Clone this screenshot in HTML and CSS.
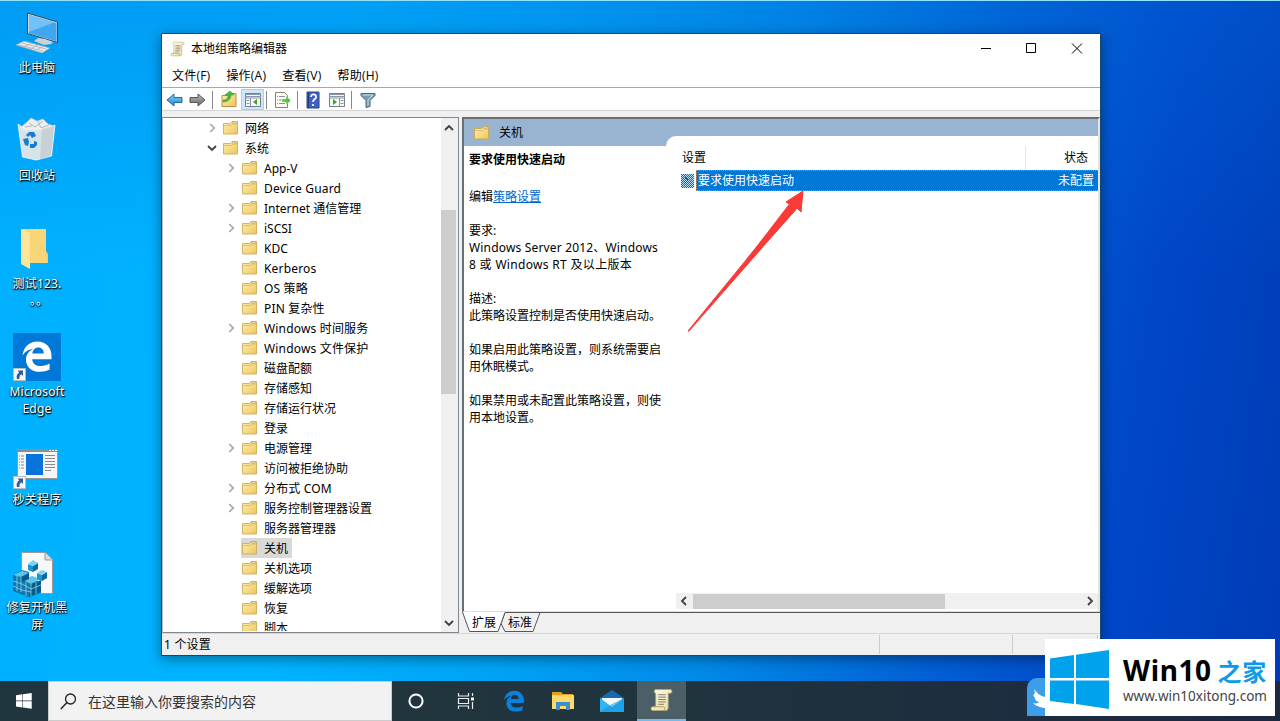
FILE: index.html
```html
<!DOCTYPE html>
<html lang="zh-CN">
<head>
  <meta charset="UTF-8" />
  <title>本地组策略编辑器</title>
  <link rel="stylesheet" href="styles.css">
</head>
<body>

  <!-- shared icons -->
  <svg class="defs" width="0" height="0">
    <defs>
      <linearGradient id="gold" x1="0" y1="0" x2="1" y2="1"><stop offset="0" stop-color="#ffefb0"/><stop offset="1" stop-color="#edc65c"/></linearGradient>
      <linearGradient id="blue" x1="0" y1="0" x2="0" y2="1"><stop offset="0" stop-color="#8bd0f5"/><stop offset="1" stop-color="#1489d6"/></linearGradient>
      <linearGradient id="grey" x1="0" y1="0" x2="0" y2="1"><stop offset="0" stop-color="#bbb"/><stop offset="1" stop-color="#666"/></linearGradient>
      <linearGradient id="paper" x1="0" y1="0" x2="1" y2="1"><stop offset="0" stop-color="#fffbe8"/><stop offset="1" stop-color="#e9dba5"/></linearGradient>
      <pattern id="dots" width="2" height="2" patternUnits="userSpaceOnUse"><rect width="2" height="2" fill="#b5dcf3"/><path d="M0 0h1v1H0zM1 1h1v1H1z" fill="#0b6fb5"/></pattern>
    </defs>
    <symbol id="folder" viewBox="0 0 15 14">
      <path d="M.5 2.500h7l1.500-2h5.500v12.500H.5z" fill="url(#gold)" stroke="#c8a450" stroke-width=".8"/>
      <path d="M1 4.500h7.500L10 3h4" fill="none" stroke="#d9b45d" stroke-width=".8"/>
      <path d="M9.500 .8H13v1.400H9.500z" fill="#fff8dd" stroke="#b69a55" stroke-width=".6"/>
    </symbol>
    <symbol id="right" viewBox="0 0 7 10"><path d="M1.200 1l4 4-4 4" fill="none" stroke="#a6a6a6" stroke-width="1.700"/></symbol>
    <symbol id="down" viewBox="0 0 10 7"><path d="M1 1l4 4 4-4" fill="none" stroke="#404040" stroke-width="1.800"/></symbol>
    <symbol id="scroll" viewBox="0 0 24 24">
      <path d="M6 1h15c2.500 0 2.500 4 0 4H19v14c0 3-1 4-3 4H3c-2.500 0-2.500-4 0-4h3V5C4 5 4 1 6 1z" fill="url(#paper)" stroke="#b5a679" stroke-width=".8"/>
      <path d="M8.500 6.500h8M8.500 9h8M8.500 11.500h8M8.500 14h8M8.500 16.500h6" stroke="#807c6c"/>
      <path d="M3 19h11c2 0 2 4 0 4" fill="none" stroke="#b5a04f"/>
    </symbol>
    <symbol id="shortcut" viewBox="0 0 13 13">
      <path d="M.5.500h12v12H.5z" fill="#f7f7f7" stroke="#bbb"/>
      <path d="M4.500 2.500H10V8L8.200 6.200C6.500 7.500 6.200 9 6.500 11H4C3 8.500 4 6 6.200 4.300z" fill="#2c5d9d"/>
    </symbol>
    <symbol id="edge" viewBox="0 0 32 32">
      <path d="M1.500 15C2.500 6.500 8.500 1 16.200 1 25.500 1 30.500 7.500 30.500 15.500v3.300H11.200c.4 4.700 4 6.800 8.800 6.800 3.200 0 6-.9 8.600-2.500v6c-3 1.400-6 2.200-9.800 2.200C10.500 31.300 5 26.500 5 19.200c0-5 2.700-8.800 7.300-11C7.800 8.600 4 11 1.500 15zm9.800-1.900h11.500c0-3.700-2-6.200-5.500-6.200-3.400 0-5.600 2.600-6 6.200z"/>
    </symbol>
    <symbol id="winlogo" viewBox="0 0 60 60">
      <path d="M0 8.500L24 5v23H0zM26 4.800L59 0v28H26zM0 30.500h24V54L0 51zM26 30.500h33V59l-33-5z"/>
    </symbol>
  </svg>

  <div class="desktop">
    <div class="icons">
      <div class="shortcut">
        <svg width="48" height="48" viewBox="0 0 48 48">
          <path d="M14.500 4l30 9v20.500l-30-9z" fill="#c9d4dc" stroke="#334d60"/>
          <path d="M16 6l27.500 8.200v18L16 24z" fill="#3fa6f0"/><path d="M16 6l25 7.500L16 23z" fill="#72c1f8"/>
          <path d="M25 29l7 1 8 3-2 2-7 1-10-4z" fill="#ccd2d5"/>
          <path d="M3 36l8-4 26 7-8 5z" fill="#eee" stroke="#96a7b0" stroke-width=".8"/>
          <path d="M6 36l24 6M9 34l24 6M11 38l8-4M17 40l8-4M23 41l8-4" stroke="#a5b0b5" stroke-width=".8"/>
        </svg>
        <span>此电脑</span>
      </div>
      <div class="shortcut">
        <svg width="48" height="48" viewBox="0 0 48 48">
          <path d="M8 10l6-5 4-4 6 3 6-2 5 5 6 2-4 5H9z" fill="#eceeef" stroke="#b8c2c8" stroke-width=".7"/>
          <path d="M16 6l6 4 8-6M25 4l3 7 8-3M12 10l7-1" fill="none" stroke="#b0bbc2"/>
          <path d="M5 7l7 5h21l9-4-3.500 31-15 4-14-3z" fill="#e2e6e8" fill-opacity=".95" stroke="#f6f8f9" stroke-width=".8"/>
          <path d="M29 12l12-3.500-3 30-11 4z" fill="#bcc5ca" opacity=".6"/>
          <g fill="#187bd2"><path d="M13 18l3-3h5l2 4-4 2-2-3-2 2z"/><path d="M10 22l5-1 1 4-1 4-3-1z"/><path d="M17 27h4v-3l3 1v3l-3 3h-4z"/></g>
        </svg>
        <span>回收站</span>
      </div>
      <div class="shortcut">
        <svg width="48" height="48" viewBox="0 0 48 48">
          <path d="M8 4h25v22l2 3v9H13z" fill="#f3cf6c"/><path d="M17 8v30h16V4H8z" fill="#f8d577"/><path d="M8 4l9 4v36l-9-5z" fill="#ffe59a"/>
        </svg>
        <span>测试123.<br><i>。。</i></span>
      </div>
      <div class="shortcut">
        <svg width="48" height="48" viewBox="0 0 48 48">
          <path d="M0 0h48v48H0z" fill="#0078d7"/>
          <use href="#edge" x="8" y="7" width="32" height="33" fill="#fff"/>
          <use href="#shortcut" x="0" y="35" width="13" height="13"/>
        </svg>
        <span>Microsoft<br>Edge</span>
      </div>
      <div class="shortcut">
        <svg width="48" height="48" viewBox="0 0 48 48">
          <path d="M4.500 8.500h40v29h-40z" fill="#f5f5f5" stroke="#9a9a9a"/><path d="M4 8h41v3H4z" fill="#8e8e8e"/>
          <path d="M36 9.500h2M39 9.500h2M42 9.500h2" stroke="#fff"/><path d="M13 13h17v21H13z" fill="#0874db"/>
          <path d="M6 15h5M6 18h5M6 21h5M6 24h5M6 27h5" stroke="#8a8a8a" stroke-dasharray="1 1 3"/>
          <path d="M32 14.500h10M32 17.500h10M32 20.500h10M32 23.500h10M32 26.500h10M32 29.500h6" stroke="#8a8a8a"/>
          <use href="#shortcut" x="0" y="35" width="13" height="13"/>
        </svg>
        <span>秒关程序</span>
      </div>
      <div class="shortcut">
        <svg width="48" height="48" viewBox="0 0 48 48">
          <path d="M8.500 3.500h24l7 7v34h-31z" fill="#f8f8f8" stroke="#999"/><path d="M32 3.500v7.500h7.500" fill="#ddd" stroke="#999"/>
          <path d="M0 26l9-5 7 2v6l12 5v10l-13 4-15-6z" fill="#0f79ad"/>
          <path d="M0 26l9-4 7 2-8 4zM10 31l9-4 9 3-10 5z" fill="#5fc4ea"/>
          <path d="M8 28l8-4v6l-7 3zM18 35l10-4v12l-12 5z" fill="#075b8c"/>
          <path d="M8 28v15M18 35v12M0 32l9 3 9 5 10-4M0 37l9 4 9 2M4 27v15M13 33v14M23 33v12" stroke="#8dd3ef" stroke-width=".8" fill="none"/>
          <path d="M15 15l5 2v6l-5-2zM24 24l5 2v6l-5-2z" fill="#1896cf"/><path d="M20 17l5-3v6l-5 3zM29 26l5-3v6l-5 3z" fill="#076a9e"/>
          <path d="M15 15l5-4 5 3-5 3zM24 24l5-3 5 2-5 3z" fill="#7dd1f3"/>
        </svg>
        <span>修复开机黑<br>屏</span>
      </div>
    </div>

    <div class="window">
      <div class="titlebar">
        <svg width="15" height="16"><use href="#scroll"/></svg>
        <span class="title">本地组策略编辑器</span>
        <svg class="controls" width="102" height="12" viewBox="0 0 102 12">
          <path d="M0 5.500h10M45.500 .500h9v9h-9zM91 .500l10 10M101 .500l-10 10" fill="none" stroke="#000"/>
        </svg>
      </div>
      <div class="menubar"><span>文件(F)</span><span>操作(A)</span><span>查看(V)</span><span>帮助(H)</span></div>
      <div class="toolbar">
        <svg width="220" height="22" viewBox="0 0 220 22">
          <path d="M1 12l7-6v3.500h8v5H8V18z" fill="url(#blue)" stroke="#23699e"/>
          <path d="M39 12l-7-6v3.500h-8v5h8V18z" fill="url(#grey)" stroke="#555"/>
          <path d="M46.500 3v18" stroke="#888"/>
          <path d="M56 7.500h7l1-2h6v13H56z" fill="url(#gold)" stroke="#b9913d"/>
          <path d="M57 12c4 0 5-2 5-5h-3l5-4 4 4h-3c0 4-3 7-8 7z" fill="#4cb83a" stroke="#388d29" stroke-width=".5"/>
          <path d="M75.500 1.500h22v20h-22z" fill="#cce8ff" stroke="#99d1ff"/>
          <path d="M79.500 5.500h15v13h-15z" fill="#f7f7f7" stroke="#777e87"/><path d="M79 8.500h16M79 6.500h16M79 10h16M84.500 10v8M80.500 12.500h3M80.500 15.500h3" stroke="#8c98a5"/><path d="M91 11v6l-4-3z" fill="#34a52c"/>
          <path d="M100.500 3v18" stroke="#888"/>
          <path d="M109.500 4.500h9l3 3v12h-12z" fill="#fffdf0" stroke="#8b836d"/><path d="M111 8.500h1M111 12h1M111 15.500h1M113 8.500h6M113 12h4M113 15.500h6" stroke="#8893a2"/><path d="M116 11h4V8l5 4.500-5 4.500v-3h-4z" fill="#53c540" stroke="#fff" stroke-width=".4"/>
          <path d="M131.500 3v18" stroke="#888"/>
          <path d="M141 4h12v16h-12z" fill="#3e62c4" stroke="#23458c"/><path d="M142.500 4v16" stroke="#193a7e"/><path d="M145 9c0-4 6-3 5 .5-1 2-3 2-3 4.500M147 16v2" fill="none" stroke="#fff" stroke-width="1.700"/>
          <path d="M163.500 5.500h15v13h-15z" fill="#f7f7f7" stroke="#777e87"/><path d="M163 6.500h16M163 8.500h16M163 10h16M173.500 10v8M174.500 12.500h3M174.500 15.500h3" stroke="#8c98a5"/><path d="M167 11v6l4-3z" fill="#34a52c"/>
          <path d="M185.500 3v18" stroke="#888"/>
          <path d="M195 5.500h14v2l-5 5v6l-4 1v-7l-5-5z" fill="#789cb4" stroke="#506878"/><path d="M197 7h10l-5 5v6" fill="none" stroke="#c9e1ed"/>
        </svg>
      </div>

      <div class="panes">
        <div class="tree">
          <ul class="nodes">
            <li class="top"><svg class="arrow"><use href="#right"/></svg><svg class="folder"><use href="#folder"/></svg><span>网络</span></li>
            <li class="top"><svg class="arrow open"><use href="#down"/></svg><svg class="folder"><use href="#folder"/></svg><span>系统</span></li>
            <li><svg class="arrow"><use href="#right"/></svg><svg class="folder"><use href="#folder"/></svg><span>App-V</span></li>
            <li><svg class="arrow"></svg><svg class="folder"><use href="#folder"/></svg><span class="latin">Device Guard</span></li>
            <li><svg class="arrow"><use href="#right"/></svg><svg class="folder"><use href="#folder"/></svg><span>Internet 通信管理</span></li>
            <li><svg class="arrow"><use href="#right"/></svg><svg class="folder"><use href="#folder"/></svg><span>iSCSI</span></li>
            <li><svg class="arrow"></svg><svg class="folder"><use href="#folder"/></svg><span>KDC</span></li>
            <li><svg class="arrow"></svg><svg class="folder"><use href="#folder"/></svg><span class="latin">Kerberos</span></li>
            <li><svg class="arrow"></svg><svg class="folder"><use href="#folder"/></svg><span class="latin">OS 策略</span></li>
            <li><svg class="arrow"></svg><svg class="folder"><use href="#folder"/></svg><span class="latin">PIN 复杂性</span></li>
            <li><svg class="arrow"><use href="#right"/></svg><svg class="folder"><use href="#folder"/></svg><span class="latin">Windows 时间服务</span></li>
            <li><svg class="arrow"></svg><svg class="folder"><use href="#folder"/></svg><span class="latin">Windows 文件保护</span></li>
            <li><svg class="arrow"></svg><svg class="folder"><use href="#folder"/></svg><span>磁盘配额</span></li>
            <li><svg class="arrow"></svg><svg class="folder"><use href="#folder"/></svg><span>存储感知</span></li>
            <li><svg class="arrow"></svg><svg class="folder"><use href="#folder"/></svg><span>存储运行状况</span></li>
            <li><svg class="arrow"></svg><svg class="folder"><use href="#folder"/></svg><span>登录</span></li>
            <li><svg class="arrow"><use href="#right"/></svg><svg class="folder"><use href="#folder"/></svg><span>电源管理</span></li>
            <li><svg class="arrow"></svg><svg class="folder"><use href="#folder"/></svg><span>访问被拒绝协助</span></li>
            <li><svg class="arrow"><use href="#right"/></svg><svg class="folder"><use href="#folder"/></svg><span class="latin">分布式 COM</span></li>
            <li><svg class="arrow"><use href="#right"/></svg><svg class="folder"><use href="#folder"/></svg><span>服务控制管理器设置</span></li>
            <li><svg class="arrow"></svg><svg class="folder"><use href="#folder"/></svg><span>服务器管理器</span></li>
            <li><svg class="arrow"></svg><div class="selected"><svg class="folder"><use href="#folder"/></svg><span>关机</span></div></li>
            <li><svg class="arrow"></svg><svg class="folder"><use href="#folder"/></svg><span>关机选项</span></li>
            <li><svg class="arrow"></svg><svg class="folder"><use href="#folder"/></svg><span>缓解选项</span></li>
            <li><svg class="arrow"></svg><svg class="folder"><use href="#folder"/></svg><span>恢复</span></li>
            <li><svg class="arrow"></svg><svg class="folder"><use href="#folder"/></svg><span>脚本</span></li>
          </ul>
          <div class="vscroll">
            <svg width="10" height="7"><path d="M1 6l4-4 4 4" fill="none" stroke="#404040" stroke-width="1.800"/></svg>
            <div class="vthumb"></div>
            <svg width="10" height="7"><use href="#down"/></svg>
          </div>
        </div>

        <div class="right">
          <div class="content">
            <div class="side">
              <div class="heading"><svg class="folder"><use href="#folder"/></svg><span>关机</span></div>
              <div class="desc">
                <b>要求使用快速启动</b>
                <p class="edit">编辑<a>策略设置</a></p>
                <p>要求:<br><span class="latin">Windows Server 2012、Windows</span><br><span class="wide">8 或 Windows RT 及以上版本</span></p>
                <p>描述:<br>此策略设置控制是否使用快速启动。</p>
                <p>如果启用此策略设置，则系统需要启<br>用休眠模式。</p>
                <p>如果禁用或未配置此策略设置，则使<br>用本地设置。</p>
              </div>
            </div>
            <div class="settings">
              <div class="list">
                <div class="columns"><span>设置</span><span class="state">状态</span></div>
                <div class="row">
                  <svg width="13" height="14"><path d="M0 0h13v14H0z" fill="url(#dots)"/><path d="M4 3l3 3-3 3" fill="none" stroke="#155a8d"/></svg>
                  <div class="cells"><span>要求使用快速启动</span><span>未配置</span></div>
                </div>
                <div class="hscroll">
                  <svg width="7" height="10"><path d="M6 1L2 5l4 4" fill="none" stroke="#404040" stroke-width="1.800"/></svg>
                  <div class="hthumb"></div>
                  <svg width="7" height="10"><path d="M1 1l4 4-4 4" fill="none" stroke="#404040" stroke-width="1.800"/></svg>
                </div>
              </div>
            </div>
          </div>
          <div class="tabs">
            <svg width="638" height="21" viewBox="0 0 638 21">
              <path d="M43 .500h35l-7 19H43l-4-8z" fill="#f0f0f0" stroke="#555"/>
              <path d="M.5 0l7 19.500H36L43 0z" fill="#fff"/>
              <path d="M.5 0l7 19.500H36L43 .500h595" fill="none" stroke="#555"/>
            </svg>
            <div class="labels"><span>扩展</span><span>标准</span></div>
          </div>
        </div>
      </div>
      <div class="status"><span class="count">1 个设置</span><span class="part"></span><span class="part last"></span></div>
    </div>

    <svg class="pointer" width="120" height="144" viewBox="0 0 120 144">
      <path d="M2 141L105 15l-5-3 17-11-2 21-4-4L3 141z" fill="#f93a37" stroke="#f93a37"/>
      <path d="M60 70L103 14l7 6L58 76z" fill="#f93a37"/>
    </svg>
  </div>

  <div class="taskbar">
    <div class="start"><svg width="16" height="16" fill="#fff"><use href="#winlogo"/></svg></div>
    <div class="search">
      <svg width="17" height="17"><circle cx="10.500" cy="6" r="5" fill="none" stroke="#222" stroke-width="1.300"/><path d="M7 9.500L.8 16" stroke="#222" stroke-width="1.500"/></svg>
      <span>在这里输入你要搜索的内容</span>
    </div>
    <div class="apps">
      <div class="app"><svg width="16" height="16"><circle cx="8" cy="8" r="6.600" fill="none" stroke="#fff" stroke-width="2"/></svg></div>
      <div class="app"><svg width="17" height="16"><path d="M1.500 0v3h10V0M1.500 16v-3h10v3M1.500 5.500h10v5h-10zM15.500 0v3M15.500 9v7" fill="none" stroke="#e8eef0" stroke-width="1.200"/><path d="M14 4.500h3v3h-3z" fill="#fff"/></svg></div>
      <div class="app"><svg width="22" height="22" fill="#0b80df"><use href="#edge"/></svg></div>
      <div class="app"><svg width="22" height="20"><path d="M0 1h9l2 2h10v5H0z" fill="#e99e17"/><path d="M0 4h22v14H0z" fill="#ffda6a"/><path d="M4 19v-8h14v8h-4v-4H8v4z" fill="#3b8fcd"/></svg></div>
      <div class="app"><svg width="24" height="23"><path d="M0 8l12-8 12 8v14H0z" fill="#1669b4"/><path d="M2 8h20v10H2z" fill="#f5fafc"/><path d="M0 8l12 9L24 8v14H0z" fill="#2db6f0"/><path d="M0 22l12-8L24 8v14z" fill="#1492dc" opacity=".55"/></svg></div>
      <div class="app active"><svg width="23" height="24"><use href="#scroll"/></svg></div>
    </div>
  </div>

  <div class="bird"><svg width="26" height="20" viewBox="0 0 26 20"><path d="M1 14c3 1 5 0 6-1-3-1-4-2-4-4-2-2-2-4 0-5l-1-4c3 4 6 7 11 8 0-4 3-7 7-6l6 1v14c-10 4-20 2-25-3z" fill="#fff"/></svg></div>
  <div class="watermark">
    <svg width="60" height="60" fill="#00a2eb"><use href="#winlogo"/></svg>
    <div class="site"><div class="brand">Win10 <span>之家</span></div><div class="url">www.win10xitong.com</div></div>
  </div>

</body>
</html>
```
FILE: styles.css
```css
* {
  box-sizing: border-box;
}

body {
  margin: 0;
  width: 1280px;
  height: 721px;
  overflow: hidden;
  position: relative;
  display: flex;
  flex-direction: column;
  font: 12px/17px "Noto Sans", "Noto Sans CJK SC", sans-serif;
  color: #000;
}

svg {
  display: block;
  flex: none;
}

.defs {
  position: absolute;
}

.desktop {
  position: relative;
  height: 681px;
  border-top: 1px solid #8fe4fb;
  background:
    linear-gradient(rgba(0, 110, 220, 0.3), rgba(0, 110, 220, 0) 40%),
    linear-gradient(98deg, #00b0ff 0%, #00b4ff 26%, #00a4f6 42%, #008ae8 58%, #0061d4 74%, #0047c8 87%, #003bb5 100%);
}

.icons {
  width: 74px;
  padding-top: 8px;
}

.shortcut {
  height: 108px;
  display: flex;
  flex-direction: column;
  align-items: center;
  gap: 2px;
}

.shortcut span {
  color: #fff;
  text-align: center;
  white-space: nowrap;
  letter-spacing: 0.2px;
  text-shadow: 1px 1px 1px #000, 0 1px 2px #000;
}

.shortcut i {
  font-style: normal;
  padding-left: 4px;
}

.window {
  position: absolute;
  left: 161px;
  top: 32px;
  width: 940px;
  height: 623px;
  border: 1px solid #16486c;
  background: #f0f0f0;
  box-shadow: 0 3px 12px rgba(0, 0, 0, 0.4);
  display: flex;
  flex-direction: column;
}

.titlebar {
  height: 29px;
  background: #fff;
  display: flex;
  align-items: center;
  padding: 0 17px 0 8px;
}

.title {
  margin-left: 6px;
}

.controls {
  margin-left: auto;
}

.menubar {
  height: 25px;
  background: #fff;
  border-bottom: 1px solid #a8a8a8;
  display: flex;
  align-items: center;
  gap: 16px;
  padding-left: 10px;
  font-family: "Open Sans", "Noto Sans CJK SC", sans-serif;
  letter-spacing: 0.22px;
}

.toolbar {
  height: 23px;
  background: #fff;
  border-bottom: 1px solid #d4d4d4;
  padding-left: 4px;
}

.panes {
  height: 516px;
  padding-top: 6px;
  display: flex;
  gap: 3px;
}

/* left tree */
.tree {
  width: 297px;
  height: 516px;
  margin-bottom: -6px;
  border: 1px solid #828790;
  border-left-color: #bbb;
  background: #fff;
  display: flex;
  overflow: hidden;
}

.nodes {
  flex: 1;
  list-style: none;
  margin: 0;
  padding: 0;
  overflow: hidden;
  height: 513px;
}

.nodes li {
  height: 20px;
  display: flex;
  align-items: center;
  padding-left: 65px;
  white-space: nowrap;
}

.nodes .top {
  padding-left: 46px;
}

.latin {
  letter-spacing: 0.17px;
}

.arrow {
  width: 7px;
  height: 10px;
  margin-right: 7px;
}

.arrow.open {
  width: 10px;
  height: 7px;
  margin: 0 6px 0 -2px;
}

.folder {
  width: 15px;
  height: 14px;
  margin-right: 7px;
}

.selected {
  display: flex;
  align-items: center;
  height: 20px;
  margin-left: -1px;
  padding: 0 4px 0 1px;
  background: #d9d9d9;
}

.vscroll {
  width: 17px;
  background: #f0f0f0;
  display: flex;
  flex-direction: column;
  align-items: center;
  justify-content: space-between;
  padding: 6px 2px 5px 0;
}

.vthumb {
  width: 15px;
  height: 184px;
  margin: 79px 0 auto;
  background: #cdcdcd;
}

/* right side */
.right {
  width: 638px;
  height: 516px;
  display: flex;
  flex-direction: column;
}

.content {
  height: 495px;
  display: flex;
  background: #fff;
  border: 2px solid #696e75;
  border-right-color: #e3e3e3;
  border-bottom: 1px solid #ddd;
}

.side {
  width: 202px;
}

.heading {
  height: 27px;
  background: #99b4d1;
  display: flex;
  align-items: center;
  padding-left: 10px;
}

.heading .folder {
  margin-right: 10px;
}

.desc {
  padding: 5px 0 0 5px;
  white-space: nowrap;
}

.desc p {
  margin: 0 0 17px;
}

.desc .edit {
  margin-top: 20px;
}

.desc a {
  color: #0066cc;
  text-decoration: underline;
}

.wide {
  letter-spacing: 0.32px;
}

.settings {
  flex: 1;
  height: 491px;
  background: linear-gradient(#99b4d1 27px, #fff 27px);
  padding-top: 17px;
}

.list {
  height: 474px;
  background: #fff;
  border-top-left-radius: 10px;
  display: flex;
  flex-direction: column;
}

.columns {
  height: 34px;
  display: flex;
  justify-content: space-between;
  padding: 10px 0 0 16px;
}

.columns span {
  padding-top: 3px;
}

.columns .state {
  width: 73px;
  padding-right: 10px;
  text-align: right;
  border-left: 1px solid #e3e3e3;
}

.row {
  display: flex;
  align-items: center;
  padding-left: 15px;
  gap: 2px;
}

.cells {
  flex: 1;
  height: 21px;
  display: flex;
  align-items: center;
  justify-content: space-between;
  padding: 0 4px 0 1px;
  background: #0078d7;
  border: 1px dotted #b08b6a;
  border-right: 0;
  color: #fff;
}

.hscroll {
  margin: auto 0 1px 10px;
  height: 16px;
  background: #f0f0f0;
  display: flex;
  align-items: center;
  padding: 0 4px 0 4px;
}

.hthumb {
  width: 252px;
  height: 15px;
  margin: 0 auto 0 6px;
  background: #cdcdcd;
}

.tabs {
  position: relative;
  height: 21px;
}

.labels {
  position: absolute;
  left: 10px;
  top: 2px;
  display: flex;
  gap: 12px;
}

.status {
  flex: 1;
  margin-top: 6px;
  border-top: 1px solid #d5d5d5;
  display: flex;
  align-items: center;
  padding-right: 2px;
}

.count {
  flex: 1;
  padding-left: 2px;
  letter-spacing: 0.2px;
}

.part {
  width: 133px;
  height: 19px;
  border-left: 1px solid #ccc;
}

.last {
  width: 86px;
  border-right: 1px solid #ccc;
}

.pointer {
  position: absolute;
  left: 686px;
  top: 189px;
}

.taskbar {
  height: 40px;
  display: flex;
  background: linear-gradient(90deg, #20363f, #20343d 50%, #1c2740);
}

.start {
  width: 48px;
  display: flex;
  align-items: center;
  justify-content: center;
}

.search {
  width: 344px;
  border: 1px solid #ccc;
  background: #f2f2f2;
  color: #333;
  font-size: 14px;
  display: flex;
  align-items: center;
  gap: 11px;
  padding-left: 11px;
}

.apps {
  display: flex;
  gap: 1px;
}

.app {
  width: 48px;
  display: flex;
  align-items: center;
  justify-content: center;
}

.active {
  width: 49px;
  background: #4c5e66;
  border-bottom: 2px solid #76b9ed;
}

.bird {
  position: absolute;
  left: 1027px;
  top: 678px;
  width: 38px;
  height: 38px;
  border-radius: 10px 10px 0 0;
  background: #3e9de9;
  padding: 11px 0 0 5px;
}

.watermark {
  position: absolute;
  left: 1045px;
  top: 639px;
  width: 230px;
  height: 77px;
  background: #fff;
  display: flex;
  align-items: center;
  padding: 4px 0 0 5px;
  gap: 13px;
}

.site {
  white-space: nowrap;
}

.brand {
  font: bold 28px/30px "Noto Sans", "Noto Sans CJK SC", sans-serif;
  letter-spacing: 0.6px;
  word-spacing: -2px;
}

.brand span {
  font-size: 24px;
  color: #0c9be8;
}

.url {
  color: #444;
  font-size: 13.5px;
  line-height: 18px;
}
```
